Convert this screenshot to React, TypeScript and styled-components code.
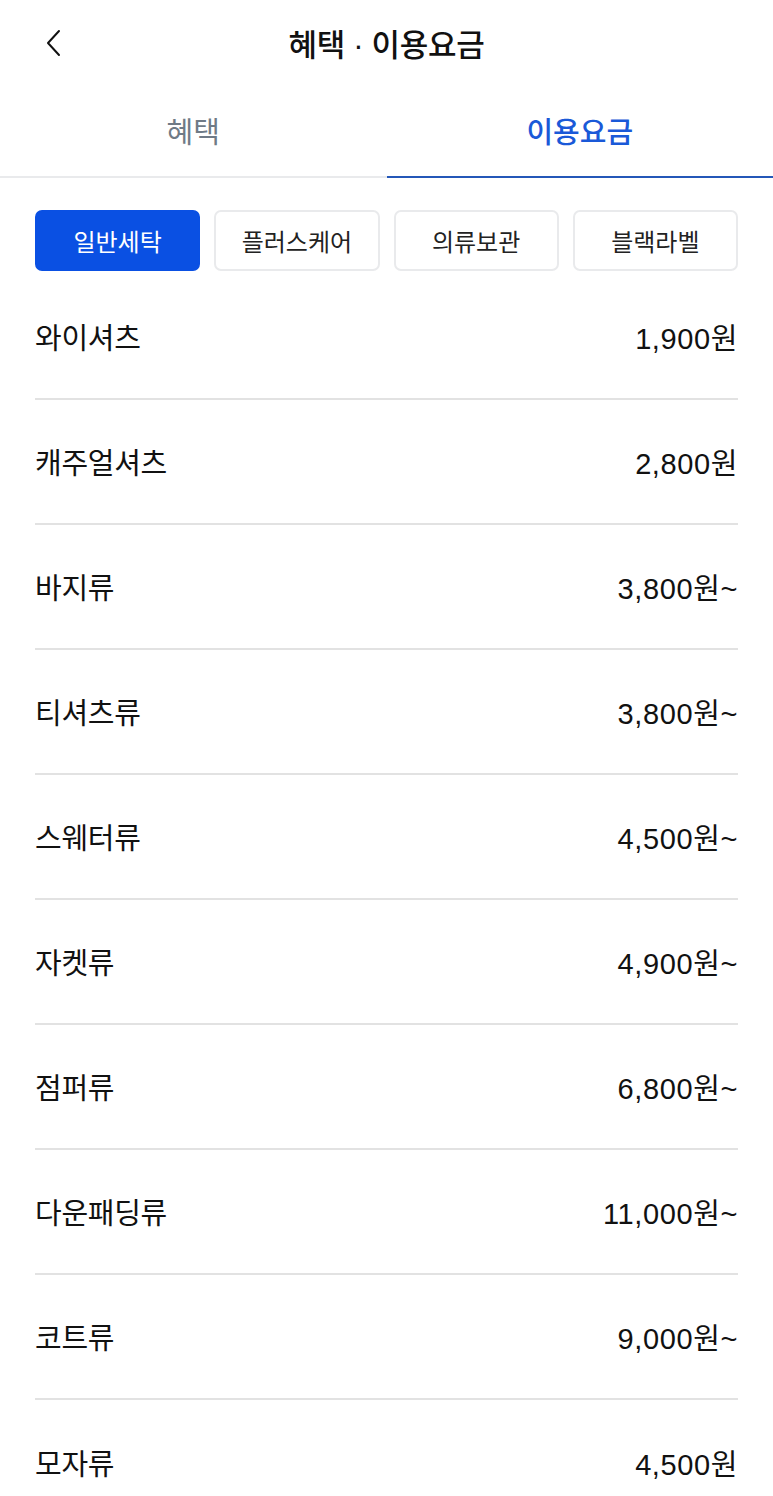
import React, { useState } from 'react';
import styled, { createGlobalStyle } from 'styled-components';

const GlobalStyle = createGlobalStyle`
  html, body {
    margin: 0;
    padding: 0;
    background: #ffffff;
  }
  body {
    font-family: "Liberation Sans", "Noto Sans CJK KR", sans-serif;
    color: #111111;
    -webkit-font-smoothing: antialiased;
  }
  * {
    box-sizing: border-box;
  }
`;

const Page = styled.div`
  width: 773px;
  min-height: 1496px;
  background: #ffffff;
`;

const Header = styled.header`
  position: relative;
  height: 84px;
  display: flex;
  align-items: center;
  justify-content: center;
`;

const BackButton = styled.button`
  position: absolute;
  left: 36px;
  top: 26px;
  width: 36px;
  height: 34px;
  padding: 0;
  border: none;
  background: transparent;
  display: flex;
  align-items: center;
  justify-content: center;
  cursor: pointer;
`;

// Latin face first so the space and middle dot stay narrow like the reference
const Title = styled.h1`
  margin: 0;
  font-family: "Liberation Sans", "Noto Sans CJK KR", sans-serif;
  font-size: 31px;
  font-weight: 500;
  letter-spacing: -0.3px;
  color: #111111;
`;

const TabBar = styled.nav`
  display: flex;
  height: 94px;
  border-bottom: 2px solid #e9eaec;
`;

const Tab = styled.button<{ $active: boolean }>`
  flex: 1;
  display: flex;
  align-items: center;
  justify-content: center;
  padding: 0;
  margin-bottom: -2px;
  border: none;
  border-bottom: 2px solid ${({ $active }) => ($active ? '#2457b8' : 'transparent')};
  background: transparent;
  font-family: "Noto Sans CJK KR", sans-serif;
  font-size: 29px;
  font-weight: ${({ $active }) => ($active ? 500 : 400)};
  color: ${({ $active }) => ($active ? '#1a59d8' : '#6f7a86')};
  cursor: pointer;
`;

const ChipRow = styled.div`
  display: grid;
  grid-template-columns: repeat(4, 1fr);
  gap: 14px;
  padding: 32px 35px 0;
`;

const Chip = styled.button<{ $active: boolean }>`
  height: 61px;
  border-radius: 7px;
  border: 2px solid ${({ $active }) => ($active ? '#0a50e3' : '#e9eaec')};
  background: ${({ $active }) => ($active ? '#0a50e3' : '#ffffff')};
  color: ${({ $active }) => ($active ? '#ffffff' : '#222222')};
  font-family: "Noto Sans CJK KR", sans-serif;
  font-size: 24px;
  font-weight: 400;
  cursor: pointer;
`;

const PriceList = styled.ul`
  list-style: none;
  margin: 0;
  padding: 4px 35px 0;
`;

const PriceRow = styled.li`
  height: 125px;
  display: flex;
  align-items: center;
  justify-content: space-between;
  padding-bottom: 2px;
  border-bottom: 2px solid #e2e2e2;
  color: #111111;

  &:last-child {
    border-bottom: none;
  }
`;

const ItemName = styled.span`
  font-family: "Noto Sans CJK KR", sans-serif;
  font-size: 29px;
  letter-spacing: -0.3px;
`;

const ItemPrice = styled.span`
  font-family: "Liberation Sans", "Noto Sans CJK KR", sans-serif;
  font-size: 29px;
  letter-spacing: 0.6px;
`;

const tabs = ['혜택', '이용요금'];
const categories = ['일반세탁', '플러스케어', '의류보관', '블랙라벨'];

const prices: Array<{ name: string; price: string }> = [
  { name: '와이셔츠', price: '1,900원' },
  { name: '캐주얼셔츠', price: '2,800원' },
  { name: '바지류', price: '3,800원~' },
  { name: '티셔츠류', price: '3,800원~' },
  { name: '스웨터류', price: '4,500원~' },
  { name: '자켓류', price: '4,900원~' },
  { name: '점퍼류', price: '6,800원~' },
  { name: '다운패딩류', price: '11,000원~' },
  { name: '코트류', price: '9,000원~' },
  { name: '모자류', price: '4,500원' },
];

const App: React.FC = () => {
  const [tab, setTab] = useState(1);
  const [category, setCategory] = useState(0);

  return (
    <>
      <GlobalStyle />
      <Page>
        <Header>
          <BackButton aria-label="뒤로">
            <svg width="20" height="28" viewBox="0 0 20 28" fill="none">
              <path d="M15 2 L4 14 L15 26" stroke="#111111" strokeWidth="2" strokeLinecap="round" strokeLinejoin="round" />
            </svg>
          </BackButton>
          <Title>혜택 · 이용요금</Title>
        </Header>

        <TabBar>
          {tabs.map((label, idx) => (
            <Tab key={label} $active={tab === idx} onClick={() => setTab(idx)}>
              {label}
            </Tab>
          ))}
        </TabBar>

        <ChipRow>
          {categories.map((label, idx) => (
            <Chip key={label} $active={category === idx} onClick={() => setCategory(idx)}>
              {label}
            </Chip>
          ))}
        </ChipRow>

        <PriceList>
          {prices.map((item) => (
            <PriceRow key={item.name}>
              <ItemName>{item.name}</ItemName>
              <ItemPrice>{item.price}</ItemPrice>
            </PriceRow>
          ))}
        </PriceList>
      </Page>
    </>
  );
};

export default App;
